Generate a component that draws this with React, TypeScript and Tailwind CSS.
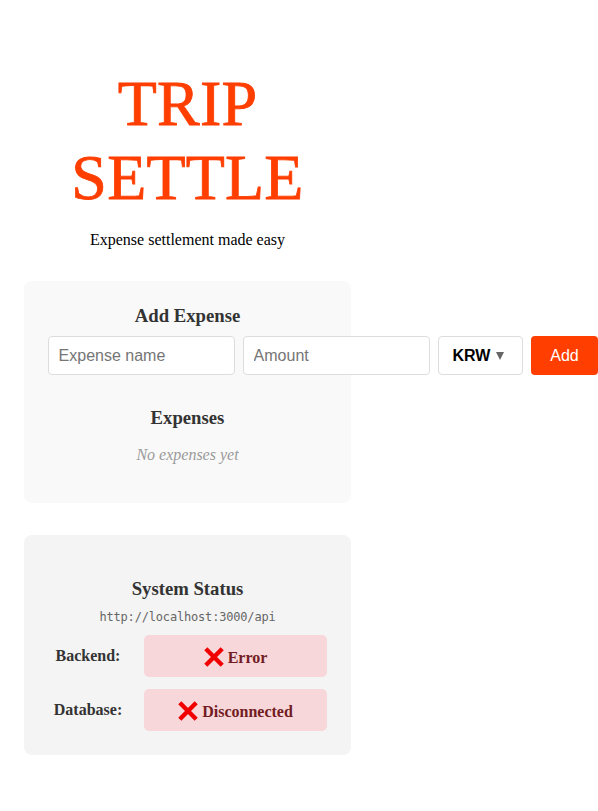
import React from 'react';

function Cross() {
  return (
    <svg className="relative top-px mr-1 h-5 w-5" viewBox="0 0 20 20" fill="none" stroke="#f00000" strokeWidth="4.4" strokeLinejoin="round">
      <path d="M1.8 1.8 18.2 18.2M18.2 1.8 1.8 18.2" />
    </svg>
  );
}

function StatusRow({ label, value }: { label: string; value: string }) {
  return (
    <div className="grid grid-cols-[80px_183px] gap-4">
      <div className="flex items-center justify-center text-base font-bold text-[#333]">{label}</div>
      <div className="flex h-[42px] items-center justify-center rounded-[5px] bg-[#f8d7da] text-base font-bold text-[#721c24]">
        <Cross />
        <span className="relative top-[2px]">{value}</span>
      </div>
    </div>
  );
}

export default function App() {
  return (
    <main className="h-[811px] w-[598px] overflow-hidden bg-white pl-6 pt-[67px] font-['Liberation_Serif',serif] text-base">
      <div className="w-[327px] text-center">
        <h1 className="text-[64px] leading-[74px] tracking-[0.2px] text-[#ff3e00] [-webkit-text-stroke:0.8px_#ff3e00]">TRIP<br />SETTLE</h1>
        <p className="mt-[13px] leading-[24px] text-black">Expense settlement made easy</p>
        <section className="mt-[29px] h-[222px] rounded-lg bg-[#f9f9f9] px-6 pt-6">
          <h2 className="text-[18.72px] font-bold leading-[22px] text-[#333]">Add Expense</h2>
          <form className="mt-[9px] flex w-[550px] gap-2 font-['Liberation_Sans',sans-serif] text-base">
            <input placeholder="Expense name" className="h-[39px] w-[187px] shrink-0 rounded border border-[#ddd] bg-white px-[9.6px] placeholder:text-[#757575]" />
            <input placeholder="Amount" className="h-[39px] w-[187px] shrink-0 rounded border border-[#ddd] bg-white px-[9.6px] placeholder:text-[#757575]" />
            <button type="button" className="flex h-[39px] w-[85px] shrink-0 items-center gap-[5.5px] rounded border border-[#ddd] bg-white pl-[13.5px] font-bold text-black">
              KRW
              <svg className="h-2 w-2 fill-[#666]" viewBox="0 0 8 8">
                <path d="M0 0h8L4 8z" />
              </svg>
            </button>
            <button type="button" className="h-[39px] w-[67px] shrink-0 rounded bg-[#ff3e00] text-white">Add</button>
          </form>
          <h2 className="mt-8 text-[18.72px] font-bold leading-[22px] text-[#333]">Expenses</h2>
          <p className="mt-[14px] italic leading-[24px] text-[#999]">No expenses yet</p>
        </section>
        <section className="mt-8 h-[220px] rounded-lg bg-[#f4f4f4] px-6 pt-[43px]">
          <h2 className="text-[18.72px] font-bold leading-[22px] text-[#333]">System Status</h2>
          <p className="mt-[9px] font-['DejaVu_Sans_Mono',monospace] text-[12px] leading-4 tracking-[-0.18px] text-[#666]">http://localhost:3000/api</p>
          <div className="mt-[10px] flex flex-col gap-3">
            <StatusRow label="Backend:" value="Error" />
            <StatusRow label="Database:" value="Disconnected" />
          </div>
        </section>
      </div>
    </main>
  );
}
